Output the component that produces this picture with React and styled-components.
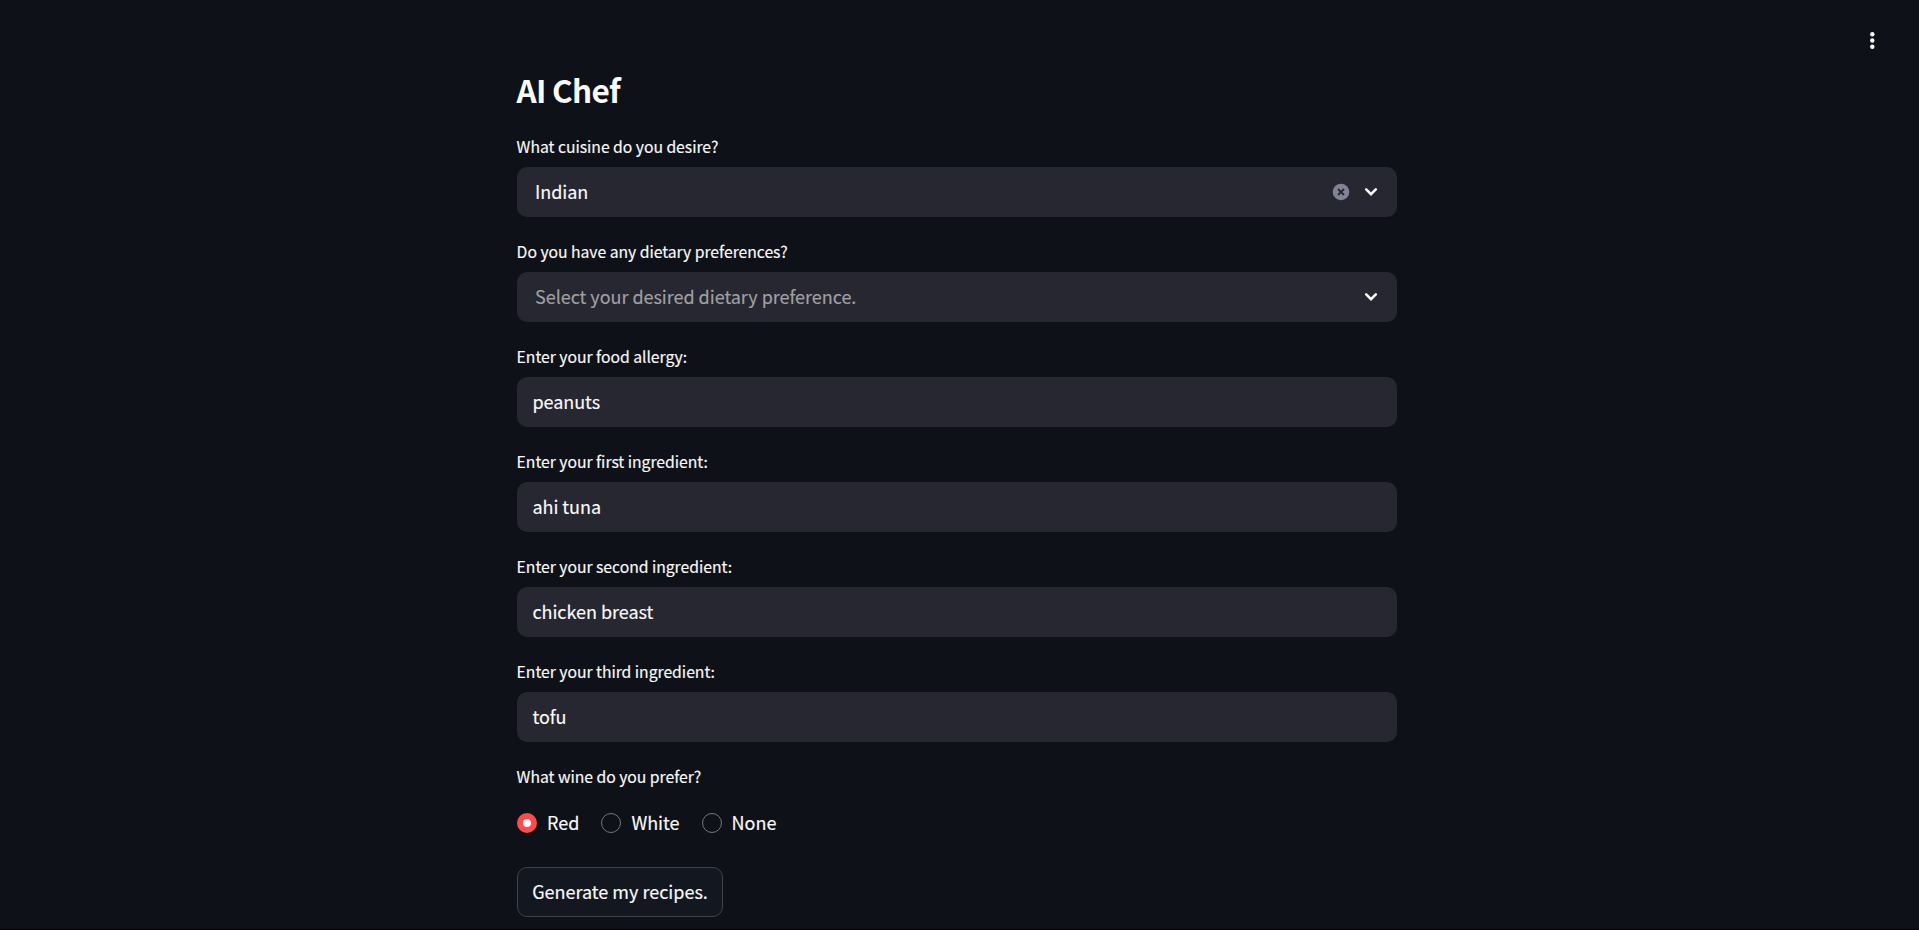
import React from "react";
import styled, { createGlobalStyle } from "styled-components";

const GlobalStyle = createGlobalStyle`
  *, *::before, *::after { box-sizing: border-box; }
  html, body { margin: 0; height: 100%; background: #0e1117; overflow: hidden; }
  #root { height: 100%; }
  body, button, input {
    font-family: "Noto Sans CJK SC", "Source Sans Pro", "Noto Sans", sans-serif;
    font-size: 18px;
    color: #fafafa;
    -webkit-text-stroke: 0.15px currentColor;
  }
`;

const Page = styled.div`
  display: grid;
  grid-template-columns: 1fr 880px 1fr;
  height: 100vh;
  padding-right: 5px;
  background: #0e1117;
  border-bottom: 1px solid #000;
`;

const Form = styled.main`
  grid-column: 2;
  display: flex;
  flex-direction: column;
  gap: 20px;
  padding-top: 68px;
`;

const Header = styled.header`
  grid-column: 3;
  display: flex;
  justify-content: flex-end;
  padding: 30px 32px 0 0;
  height: 60px;
`;

const Title = styled.h1`
  margin: 0 0 2px -0.6px;
  height: 42px;
  font-size: 31.5px;
  line-height: 42px;
  font-weight: 700;
  letter-spacing: -0.7px;
  -webkit-text-stroke: 0;
`;

const Field = styled.div`
  display: flex;
  flex-direction: column;
  gap: 5px;
`;

const Label = styled.label`
  height: 30px;
  margin-left: -0.4px;
  font-size: 15.75px;
  line-height: 30px;
  letter-spacing: -0.04px;
`;

const TextInput = styled.input`
  height: 50px;
  padding: 0 15.4px 2px;
  border: 0;
  border-radius: 10px;
  outline: 0;
  background: #262730;
  letter-spacing: -0.03px;
`;

const SelectBox = styled.div`
  display: flex;
  align-items: center;
  gap: 10px;
  height: 50px;
  padding: 0 16px 0 18px;
  border-radius: 10px;
  background: #262730;
`;

const Value = styled.span`
  flex: 1;
  height: 50px;
  line-height: 48px;
  letter-spacing: -0.03px;
  color: ${(p) => (p.$muted ? "#a0a0a3" : "#fafafa")};
`;

const RadioRow = styled.div`
  display: flex;
  align-items: center;
  height: 30px;
  gap: 22px;
  margin: 11px 0 9px;
`;

const Option = styled.label`
  display: flex;
  align-items: center;
  gap: 10px;
`;

const OptionText = styled.span`
  height: 30px;
  line-height: 28px;
`;

const Dot = styled.span`
  width: 20px;
  height: 20px;
  border-radius: 50%;
  border: ${(p) => (p.$on ? "6.5px solid #ff4b4b" : "1.25px solid #75767b")};
  background: ${(p) => (p.$on ? "#fafafa" : "#0e1117")};
`;

const Button = styled.button`
  align-self: flex-start;
  width: 206px;
  height: 50px;
  padding: 0 0 2px;
  border: 1px solid #41444c;
  border-radius: 10px;
  background: #131720;
  line-height: 46px;
`;

const Chevron = () => (
  <svg width="20" height="20" viewBox="0 0 20 20" fill="none">
    <path d="m5.2 7.4 4.8 4.7 4.8-4.7" stroke="#fafafa" strokeWidth="2.6" strokeLinecap="round" />
  </svg>
);

const Clear = () => (
  <svg width="20" height="20" viewBox="0 0 20 20">
    <circle cx="10" cy="10" r="8.3" fill="#808495" />
    <path d="m7 7 6 6m0-6-6 6" stroke="#262730" strokeWidth="1.8" />
  </svg>
);

const Menu = () => (
  <svg width="20" height="20" viewBox="0 0 20 20" fill="#fafafa">
    <circle cx="10.3" cy="4.3" r="2.2" />
    <circle cx="10.3" cy="10.5" r="2.2" />
    <circle cx="10.3" cy="16.7" r="2.2" />
  </svg>
);

const inputs = [
  ["Enter your food allergy:", "peanuts"],
  ["Enter your first ingredient:", "ahi tuna"],
  ["Enter your second ingredient:", "chicken breast"],
  ["Enter your third ingredient:", "tofu"],
];

export default function App() {
  return (
    <Page>
      <GlobalStyle />
      <Form>
        <Title>AI Chef</Title>
        <Field>
          <Label>What cuisine do you desire?</Label>
          <SelectBox>
            <Value>Indian</Value>
            <Clear />
            <Chevron />
          </SelectBox>
        </Field>
        <Field>
          <Label>Do you have any dietary preferences?</Label>
          <SelectBox>
            <Value $muted>Select your desired dietary preference.</Value>
            <Chevron />
          </SelectBox>
        </Field>
        {inputs.map(([label, value]) => (
          <Field key={label}>
            <Label>{label}</Label>
            <TextInput defaultValue={value} />
          </Field>
        ))}
        <Field>
          <Label>What wine do you prefer?</Label>
          <RadioRow>
            {["Red", "White", "None"].map((name) => (
              <Option key={name}>
                <Dot $on={name === "Red"} />
                <OptionText>{name}</OptionText>
              </Option>
            ))}
          </RadioRow>
        </Field>
        <Button>Generate my recipes.</Button>
      </Form>
      <Header>
        <Menu />
      </Header>
    </Page>
  );
}
